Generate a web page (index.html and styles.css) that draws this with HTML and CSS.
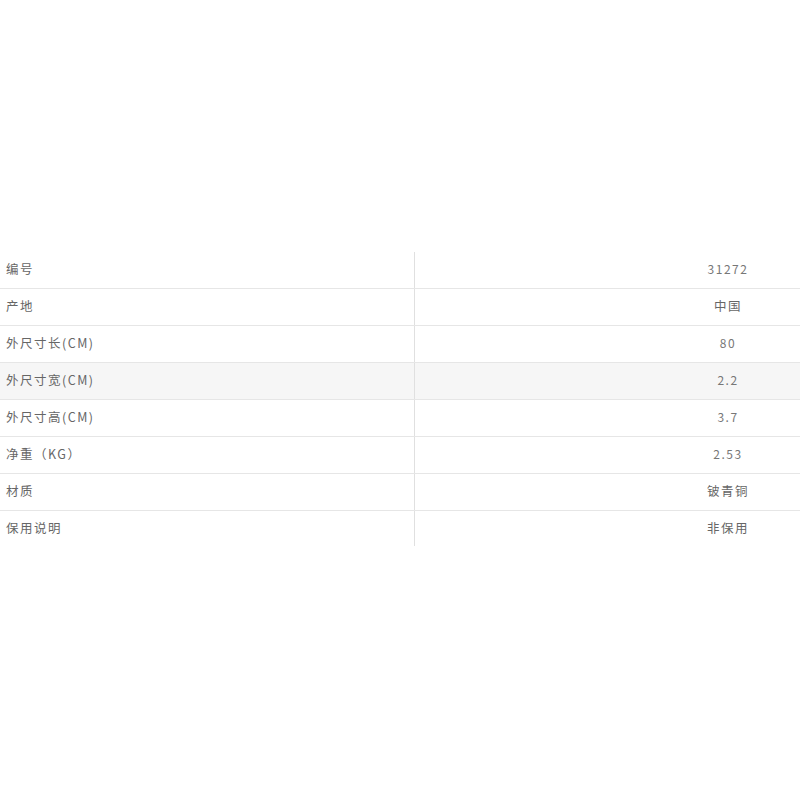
FILE: index.html
```html
<!DOCTYPE html>
<html lang="zh">
<head>
<meta charset="utf-8">
<title>参数</title>
<link rel="stylesheet" href="styles.css">
</head>
<body>
<div class="page">
  <div class="spec">
    <div class="row"><div class="k">编号</div><div class="v num">31272</div></div>
    <div class="row"><div class="k">产地</div><div class="v">中国</div></div>
    <div class="row"><div class="k">外尺寸长(CM)</div><div class="v num">80</div></div>
    <div class="row alt"><div class="k">外尺寸宽(CM)</div><div class="v num">2.2</div></div>
    <div class="row"><div class="k">外尺寸高(CM)</div><div class="v num">3.7</div></div>
    <div class="row"><div class="k">净重（KG）</div><div class="v num">2.53</div></div>
    <div class="row"><div class="k">材质</div><div class="v">铍青铜</div></div>
    <div class="row last"><div class="k">保用说明</div><div class="v">非保用</div></div>
  </div>
</div>
</body>
</html>
```
FILE: styles.css
```css
html, body {
  margin: 0;
  padding: 0;
  background: #fff;
}
.page {
  width: 800px;
  height: 800px;
  padding-top: 252px;
  box-sizing: border-box;
  font-family: "Noto Sans CJK SC", "Noto Sans", sans-serif;
  font-size: 12.5px;
  color: #666;
  letter-spacing: 1.5px;
}
.spec {
  display: flex;
  flex-direction: column;
}
.row {
  display: grid;
  grid-template-columns: 415px 385px;
  height: 37px;
  border-bottom: 1px solid #e6e6e6;
  box-sizing: border-box;
}
.row.last {
  border-bottom: none;
  height: 35px;
}
.row.alt {
  background: #f6f6f6;
}
.k {
  border-right: 1px solid #e0e0e0;
  padding-left: 6px;
  padding-bottom: 3px;
  display: flex;
  align-items: center;
}
.v {
  display: flex;
  align-items: center;
  justify-content: center;
  padding-left: 241px;
  padding-bottom: 3px;
  white-space: nowrap;
}
.v.num {
  font-size: 12px;
  color: #777;
  letter-spacing: 1.5px;
}
```
